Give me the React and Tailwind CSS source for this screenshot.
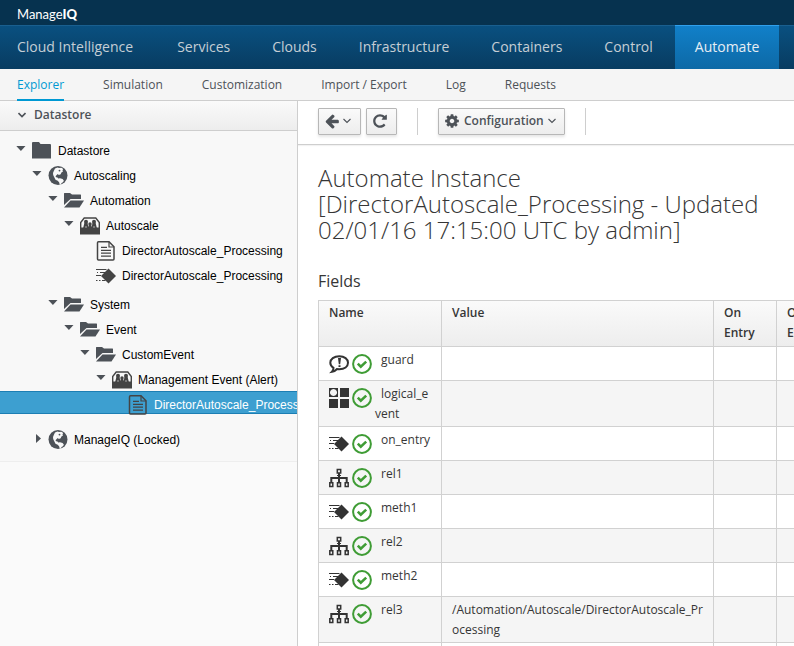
import React from "react";

const mainNav = ["Cloud Intelligence", "Services", "Clouds", "Infrastructure", "Containers", "Control", "Automate"];
const subNav = ["Explorer", "Simulation", "Customization", "Import / Export", "Log", "Requests"];

const tree = [
  { depth: 0, icon: "folder", label: "Datastore", open: true },
  { depth: 1, icon: "globe", label: "Autoscaling", open: true },
  { depth: 2, icon: "folderOpen", label: "Automation", open: true },
  { depth: 3, icon: "class", label: "Autoscale", open: true },
  { depth: 4, icon: "doc", label: "DirectorAutoscale_Processing" },
  { depth: 4, icon: "method", label: "DirectorAutoscale_Processing", gap: true },
  { depth: 2, icon: "folderOpen", label: "System", open: true },
  { depth: 3, icon: "folderOpen", label: "Event", open: true },
  { depth: 4, icon: "folderOpen", label: "CustomEvent", open: true },
  { depth: 5, icon: "class", label: "Management Event (Alert)", open: true },
  { depth: 6, icon: "doc", label: "DirectorAutoscale_Processing", selected: true },
  { depth: 1, icon: "globe", label: "ManageIQ (Locked)", open: false },
];

const fields = [
  { icon: "assertion", name: "guard", value: "" },
  { icon: "attribute", name: "logical_event", value: "" },
  { icon: "method", name: "on_entry", value: "" },
  { icon: "relation", name: "rel1", value: "" },
  { icon: "method", name: "meth1", value: "" },
  { icon: "relation", name: "rel2", value: "" },
  { icon: "method", name: "meth2", value: "" },
  { icon: "relation", name: "rel3", value: "/Automation/Autoscale/DirectorAutoscale_Processing" },
  { icon: "method", name: "meth3", value: "" },
];

const shapes = {
  folder: <path fill="currentColor" d="M0 2q0-1 1-1h6l1.500 2h9.500q1 0 1 1V17.500H0z" />,
  folderOpen: (
    <g fill="currentColor">
      <path d="M0 2.500q0-.5.500-.5H6l2 1.500h8.500q.5 0 .5.500V8H6.500L0 14z" />
      <path d="M0 16.500l6.500-7H20L15.500 16.500z" />
    </g>
  ),
  globe: (
    <g>
      <circle cx="10" cy="9.500" r="9.500" fill="currentColor" />
      <path
        fill="#f8f8f8"
        d="M7 2.500l2.500-1 1.500.5 2.500-.2 1.600 1.200-.6 1.600.5 1-1.600 1-.7 1.600-1.900.7-1-.8-1.100.8-1.200 1.300.7 1.100 1.300.3.7 1 1.800-.4 2.600.9 1.300 1.600-1 1.500-1.300.8-.8 1.500-1.100.1-.6-2.300-1.400-1.600-2.200-1L6 10.700 5.200 9 5 7l.8-2z"
      />
      <circle cx="11.500" cy="4.600" r="0.900" fill="currentColor" />
    </g>
  ),
  class: (
    <g fill="currentColor">
      <path fill="none" stroke="currentColor" strokeWidth="1.400" d="M.7 18V6.500L4.200 2h11.600l3.500 4.500V18" />
      <path d="M0 11.500h20v7H0z" />
      <circle cx="6" cy="5.800" r="2" />
      <circle cx="10" cy="8" r="1.700" />
      <circle cx="14" cy="5.800" r="2" />
      <path d="M4.500 6.500h3l1 6H3zM9 8.500h2l1.200 4H7.800zM12.500 6.500h3l1.500 6h-5.500z" />
      <path stroke="#f4f4f4" strokeWidth="0.600" d="M6 10v2M14 10v2" />
    </g>
  ),
  doc: (
    <g fill="none" stroke="currentColor" strokeWidth="1.500">
      <path d="M2.500.8h10.500l5 5V18q0 1-1 1H2.500q-1 0-1-1V1.800q0-1 1-1z" />
      <path strokeWidth="1.200" d="M13 .8V6h5" />
      <path strokeWidth="1.300" d="M5 6.300h6M5 9.300h10M5 12.200h10M5 15.200h10" />
    </g>
  ),
  method: (
    <g>
      <path stroke="currentColor" strokeWidth="1.100" d="M0 3.500h10.500M1 6.500h1M4 6.500h5M0 9.500h5M0 14.500h1.500M3 14.500h1.500M6 14.500h3.500" />
      <path fill="currentColor" d="M12.500 2.500L20 10l-7.500 7.500L5 10z" />
    </g>
  ),
  assertion: (
    <g>
      <path
        fill="none"
        stroke="currentColor"
        strokeWidth="2"
        d="M10.300 2.300C15.500 2.300 19 5 19 8.800s-3.500 6.400-8.700 6.400l-2.300-.2q-2 2.300-5 2.800 1.500-1.500 1.500-4Q1.300 12 1.300 8.800c0-3.700 3.700-6.500 9-6.500z"
      />
      <path fill="currentColor" d="M9 4h3l-.8 6.200h-1.400zM9.500 11.200h2v1.900h-2z" />
    </g>
  ),
  attribute: (
    <g fill="currentColor">
      <path fillRule="evenodd" d="M0 0h9v9H0zM4.500 1a3.500 3.500 0 1 0 .01 0z" />
      <path d="M11 0h9v9h-9zM0 11h9v9H0zM11 11h9v9h-9z" />
    </g>
  ),
  relation: (
    <g fill="none" stroke="currentColor" strokeWidth="1.500">
      <path d="M8.300 1.500h3.400v3.400H8.300zM.8 14.800h3v3.700h-3zM8.500 14.800h3v3.700h-3zM16.200 14.800h3v3.700h-3z" />
      <path strokeWidth="2" d="M10 5v10M2.300 15V10h15.400v5" />
      <path d="M8 7.500h4" strokeWidth="1" />
    </g>
  ),
  check: (
    <g fill="none" stroke="#3f9c35">
      <circle cx="10" cy="10" r="8.900" strokeWidth="2" />
      <path strokeWidth="2.600" d="M5.800 9.600l3 3 5.400-5" />
    </g>
  ),
};

function Glyph({ name }) {
  return (
    <svg aria-hidden="true" viewBox="0 0 20 20" className="h-5 w-5 shrink-0">
      {shapes[name]}
    </svg>
  );
}

function Solid({ d }) {
  return (
    <svg aria-hidden="true" viewBox="0 0 1792 1792" className="h-4 w-4 shrink-0" fill="currentColor">
      <path d={d} />
    </svg>
  );
}

function Chevron({ bold }) {
  return (
    <svg
      aria-hidden="true"
      viewBox="0 0 8 8"
      className="h-2 w-2 shrink-0"
      fill="none"
      stroke="currentColor"
      strokeWidth={bold ? 1.6 : 1.1}
    >
      <path d="M.5 2l3.500 3.500L7.500 2" />
    </svg>
  );
}

const arrowLeft =
  "M1664 896v128q0 53-32.500 90.500t-84.500 37.500h-704l293 294q38 36 38 90t-38 90l-75 76q-37 37-90 37-52 0-91-37l-651-652q-37-37-37-90 0-52 37-91l651-650q38-38 91-38 52 0 90 38l75 74q38 38 38 91t-38 91l-293 293h704q52 0 84.500 37.500t32.500 90.500z";
const repeat =
  "M1664 256v448q0 26-19 45t-45 19h-448q-42 0-59-40-17-39 14-69l138-138q-148-137-349-137-104 0-198.500 40.500t-163.500 109.500-109.500 163.500-40.500 198.500 40.500 198.500 109.500 163.500 163.500 109.500 198.500 40.500q119 0 225-52t179-147q7-10 23-12 15 0 25 9l137 138q9 8 9.500 20.500t-7.500 22.500q-109 132-264 204.500t-327 72.500q-156 0-298-61t-245-164-164-245-61-298 61-298 164-245 245-164 298-61q147 0 284.500 55.500t244.500 156.500l130-129q29-31 70-14 39 17 39 59z";
const cog =
  "M1152 896q0-106-75-181t-181-75-181 75-75 181 75 181 181 75 181-75 75-181zm512-109v222q0 12-8 23t-20 13l-185 28q-19 54-39 91 35 50 107 138 10 12 10 25t-9 23q-27 37-99 108t-94 71q-12 0-26-9l-138-108q-44 23-91 38-16 136-29 186-7 28-36 28h-222q-14 0-24.500-8.500t-11.500-21.500l-28-184q-49-16-90-37l-141 107q-10 9-25 9-14 0-25-11-126-114-165-168-7-10-7-23 0-12 8-23 15-21 51-66.500t54-70.500q-27-50-41-99l-183-27q-13-2-21-12.500t-8-23.500v-222q0-12 8-23t19-13l186-28q14-46 39-92-40-57-107-138-10-12-10-24 0-10 9-23 26-36 98.500-107.500t94.500-71.500q13 0 26 10l138 107q44-23 91-38 16-136 29-186 7-28 36-28h222q14 0 24.500 8.500t11.500 21.500l28 184q49 16 90 37l142-107q9-9 24-9 13 0 25 10 129 119 165 170 7 8 7 22 0 12-8 23-15 21-51 66.500t-54 70.500q26 50 41 98l183 28q13 2 21 12.500t8 23.500z";

const buttonClass =
  "flex h-[27px] items-center rounded-[1px] border border-[#b7b7b7] bg-linear-to-b from-[#fafafa] to-[#ededed] text-xs font-semibold text-[#4d5258] shadow-[0_2px_3px_rgba(3,3,3,0.1)]";

function TreeRow({ node }) {
  const state = node.selected
    ? "-mt-px mb-[13px] h-[23px] border-y border-[#1c7eb3] bg-[#3d9fd0] pt-1 text-white"
    : node.gap
      ? "mb-1 h-[25px] text-black"
      : "h-[25px] text-black";
  return (
    <li className={`flex items-center whitespace-nowrap ${state}`} style={{ paddingLeft: 16 + node.depth * 16 }}>
      <span className="flex h-5 w-4 shrink-0 pt-1 text-[#4d5258]">
        {node.open !== undefined && (
          <svg aria-hidden="true" viewBox="0 0 10 10" width="10" height="10" fill="currentColor">
            <path d={node.open ? "M.3 1h9.200L4.900 6z" : "M4 0l5 4.500L4 9z"} />
          </svg>
        )}
      </span>
      <span className={node.icon === "globe" || node.icon.startsWith("folder") ? "mr-1.5 text-[#4d5258]" : "mr-1.5 text-[#444444]"}>
        <Glyph name={node.icon} />
      </span>
      <span>{node.label}</span>
    </li>
  );
}

export default function App() {
  return (
    <div className="flex h-screen flex-col overflow-hidden bg-white font-['Open_Sans',sans-serif] text-xs text-[#363636]">
      <header className="shrink-0">
        <div className="flex h-[25px] items-end bg-[#06324f] px-[17px] font-['Lato',sans-serif] text-[13px] leading-[21px] text-white">
          <span>Manage</span>
          <span className="font-black">IQ</span>
        </div>
        <nav className="flex h-11 gap-0.5 border-t border-[#195f8f] bg-linear-to-b from-[#095080] to-[#083c61] text-sm">
          {mainNav.map((item) => (
            <a
              key={item}
              href="#"
              className={
                item === "Automate"
                  ? "-mt-px flex items-center border-t border-[#30a0ec] bg-linear-to-b from-[#1180c9] to-[#0d69a6] px-5 pb-0.5 text-[#e6eef4]"
                  : "flex items-center px-5 pb-0.5 text-[#c5ced5] first:pr-[22px] first:pl-[17px]"
              }
            >
              {item}
            </a>
          ))}
        </nav>
        <nav className="flex h-8 gap-[39px] border-b border-[#cecece] bg-[#f5f5f5] px-[17px]">
          {subNav.map((item) => (
            <a
              key={item}
              href="#"
              className={
                item === "Explorer"
                  ? "-mb-px flex items-center border-b-2 border-[#0099d3] pt-px text-[#0099d3]"
                  : "flex items-center text-[#4d5258]"
              }
            >
              {item}
            </a>
          ))}
        </nav>
      </header>

      <div className="flex min-h-0 flex-1">
        <aside className="w-[298px] shrink-0 overflow-hidden border-r border-[#cecece] bg-[#fafafa]">
          <h2>
            <button
              type="button"
              className="flex h-[30px] w-full items-center gap-2 border-b border-[#cecece] bg-linear-to-b from-[#fafafa] to-[#ededed] pb-0.5 pl-[18px] font-semibold text-[#4d5258]"
            >
              <Chevron bold />
              Datastore
            </button>
          </h2>
          <ul className="overflow-hidden border-b border-[#eeeeee] bg-[#f8f8f8] pt-[7px] pb-[9px] font-['Liberation_Sans',sans-serif] text-xs">
            {tree.map((node, i) => (
              <TreeRow key={i} node={node} />
            ))}
          </ul>
        </aside>

        <main className="min-w-0 flex-1 overflow-hidden">
          <div className="flex h-11 items-start border-b border-[#cecece] pt-[7px] pl-5 shadow-[0_1px_1px_rgba(0,0,0,0.05)]">
            <button type="button" aria-label="Back" className={`${buttonClass} mr-[5px] w-[43px] gap-[3px] pb-px pl-[5px]`}>
              <Solid d={arrowLeft} />
              <Chevron />
            </button>
            <button type="button" aria-label="Refresh" className={`${buttonClass} w-[31px] pb-px pl-[5px]`}>
              <Solid d={repeat} />
            </button>
            <div className="mx-5 h-[27px] w-px bg-[#cecece]" />
            <button type="button" className={`${buttonClass} gap-1 pr-2 pb-0.5 pl-[5px]`}>
              <Solid d={cog} />
              <span>Configuration</span>
              <Chevron />
            </button>
            <div className="ml-5 h-[27px] w-px bg-[#cecece]" />
          </div>

          <div className="pl-5">
            <h1 className="mt-5 pr-5 text-2xl leading-[26px] font-light">
              Automate Instance [DirectorAutoscale_Processing - Updated 02/01/16 17:15:00 UTC by admin]
            </h1>
            <h3 className="mt-7 text-base leading-5">Fields</h3>
            <table className="mt-[9px] w-[582px] table-fixed border-collapse text-xs leading-5">
              <colgroup>
                <col className="w-[123px]" />
                <col className="w-[272px]" />
                <col className="w-[63px]" />
                <col className="w-[60px]" />
                <col className="w-[64px]" />
              </colgroup>
              <thead>
                <tr className="bg-linear-to-b from-[#fafafa] to-[#ededed] text-left align-top">
                  {["Name", "Value", "On Entry", "On Exit", "On Error"].map((h) => (
                    <th key={h} scope="col" className="border border-[#d1d1d1] px-2.5 pt-0.5 pb-[3px] font-semibold">
                      {h}
                    </th>
                  ))}
                </tr>
              </thead>
              <tbody>
                {fields.map((f) => (
                  <tr key={f.name} className="align-top even:bg-[#f5f5f5]">
                    <td className="border border-[#d1d1d1] px-2.5 pt-[3px] pb-0.5">
                      <div className="flex min-h-7">
                        <div className="flex w-[46px] shrink-0 gap-[3px] pt-1 text-[#333333]">
                          <Glyph name={f.icon} />
                          <Glyph name="check" />
                        </div>
                        <span className="indent-1.5 break-all">{f.name}</span>
                      </div>
                    </td>
                    <td className="border border-[#d1d1d1] px-2.5 pt-[3px] pb-0.5 break-all">{f.value}</td>
                    <td className="border border-[#d1d1d1]" />
                    <td className="border border-[#d1d1d1]" />
                    <td className="border border-[#d1d1d1]" />
                  </tr>
                ))}
              </tbody>
            </table>
          </div>
        </main>
      </div>
    </div>
  );
}
